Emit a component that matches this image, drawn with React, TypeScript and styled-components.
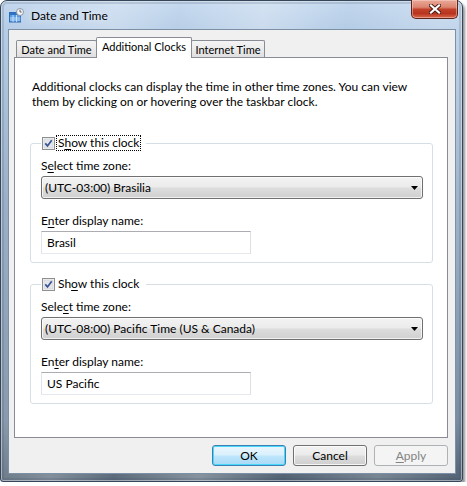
import React from "react";
import styled, { createGlobalStyle } from "styled-components";

const uiFont = `Lato, "Noto Sans", "DejaVu Sans", sans-serif`;

const GlobalStyle = createGlobalStyle`
  html, body {
    margin: 0;
    padding: 0;
    background: #ffffff;
  }
  body {
    font-family: ${uiFont};
    font-size: 12px;
    color: #000000;
  }
`;

const Window = styled.div`
  width: 463px;
  height: 482px;
  box-sizing: border-box;
  display: flex;
  flex-direction: column;
  border: 1px solid #33465b;
  border-radius: 7px 7px 3px 3px;
  background:
    linear-gradient(
      98deg,
      rgba(255, 255, 255, 0) 0%,
      rgba(255, 255, 255, 0.28) 22%,
      rgba(255, 255, 255, 0.05) 34%,
      rgba(255, 255, 255, 0.3) 50%,
      rgba(255, 255, 255, 0) 66%,
      rgba(255, 255, 255, 0.22) 84%,
      rgba(255, 255, 255, 0) 100%
    ),
    linear-gradient(
      to bottom,
      #c2d7ee 0px,
      #b4cce6 28px,
      #93aac4 200px,
      #74889d 420px,
      #4f5f70 482px
    );
  box-shadow: 2px 3px 3px rgba(0, 0, 0, 0.45),
    inset 0 0 0 1px rgba(255, 255, 255, 0.45),
    inset 0 0 0 3px rgba(60, 80, 100, 0.18);
`;

const TitleBar = styled.div`
  height: 28px;
  flex: none;
  display: flex;
  align-items: center;
  padding-left: 8px;
  padding-right: 4px;
`;

const TitleText = styled.span`
  margin-left: 7px;
  font-size: 12px;
  color: #000000;
  text-shadow: 0 0 8px rgba(255, 255, 255, 0.9);
`;

const CloseButton = styled.div`
  margin-left: auto;
  align-self: flex-start;
  margin-top: -1px;
  width: 47px;
  height: 19px;
  box-sizing: border-box;
  display: flex;
  align-items: center;
  justify-content: center;
  border: 1px solid #5e2419;
  border-top: none;
  border-radius: 0 0 5px 5px;
  background: linear-gradient(
    to bottom,
    #e9a998 0%,
    #dc8570 40%,
    #c2412a 52%,
    #b8341e 75%,
    #d96a4c 100%
  );
  box-shadow: inset 0 0 0 1px rgba(255, 220, 210, 0.45);
`;

const ClientArea = styled.div`
  flex: 1;
  margin: 0 6px 7px 7px;
  display: flex;
  flex-direction: column;
  border: 1px solid #7b8fa5;
  background: #f0f0f0;
  padding: 7px 7px 7px 5px;
  min-height: 0;
`;

const TabRow = styled.div`
  height: 20px;
  flex: none;
  display: flex;
  align-items: flex-end;
  padding-left: 2px;
  position: relative;
  z-index: 1;
`;

const Tab = styled.div<{ $active?: boolean; $width: number }>`
  width: ${(p) => p.$width}px;
  height: ${(p) => (p.$active ? 21 : 17)}px;
  margin-bottom: ${(p) => (p.$active ? -1 : 0)}px;
  margin-left: -1px;
  box-sizing: border-box;
  display: flex;
  align-items: center;
  justify-content: center;
  padding-bottom: ${(p) => (p.$active ? 3 : 0)}px;
  border: 1px solid #898c95;
  border-bottom: none;
  border-radius: 2px 2px 0 0;
  background: ${(p) =>
    p.$active
      ? "#ffffff"
      : "linear-gradient(to bottom, #f4f4f4 0%, #ebebeb 50%, #dfdfdf 100%)"};
  position: relative;
  z-index: ${(p) => (p.$active ? 2 : 1)};
  font-size: 11px;
  white-space: nowrap;

  &:first-child {
    margin-left: 0;
  }
`;

const Panel = styled.div`
  flex: 1;
  min-height: 0;
  box-sizing: border-box;
  background: #ffffff;
  border: 1px solid #898c95;
  padding: 21px 14px 0 15px;
`;

const Description = styled.p`
  margin: 0 0 0 2px;
  line-height: 15px;
  font-size: 12px;
`;

const Group = styled.fieldset<{ $first?: boolean }>`
  margin: ${(p) => (p.$first ? 26 : 13)}px 0 0 0;
  padding: 7px 9px 8px 10px;
  border: 1px solid #d5dfe5;
  border-radius: 3px;
  min-inline-size: 0;
`;

const Legend = styled.legend`
  padding: 0 5px 0 1px;
  height: 16px;
  display: flex;
  align-items: center;
`;

const CheckLabel = styled.span<{ $focused?: boolean }>`
  margin-left: 1px;
  padding: 0 1px;
  line-height: 14px;
  border: 1px dotted ${(p) => (p.$focused ? "#000000" : "transparent")};
`;

const FieldLabel = styled.div`
  line-height: 15px;
  margin-bottom: 3px;
`;

const ComboBox = styled.div`
  height: 23px;
  box-sizing: border-box;
  display: flex;
  align-items: center;
  justify-content: space-between;
  padding: 0 4px 0 3px;
  margin-bottom: 14px;
  border: 1px solid #707070;
  border-radius: 3px;
  background: linear-gradient(
    to bottom,
    #f3f3f3 0%,
    #ebebeb 48%,
    #dddddd 52%,
    #d0d0d0 100%
  );
  box-shadow: inset 0 0 0 1px rgba(255, 255, 255, 0.7);
`;

const TextBox = styled.input`
  display: block;
  width: 210px;
  height: 23px;
  box-sizing: border-box;
  margin: 0;
  padding: 0 5px;
  border: 1px solid;
  border-color: #abadb3 #dbdfe6 #e3e9ef #e2e3ea;
  background: #ffffff;
  font-family: ${uiFont};
  font-size: 12px;
  color: #000000;
  outline: none;
`;

const ButtonRow = styled.div`
  flex: none;
  display: flex;
  justify-content: flex-end;
  gap: 7px;
  margin-top: 7px;
`;

const Button = styled.div<{ $variant?: "default" | "normal" | "disabled" }>`
  width: 74px;
  height: 21px;
  box-sizing: border-box;
  display: flex;
  align-items: center;
  justify-content: center;
  border-radius: 3px;
  font-size: 12px;
  border: 1px solid
    ${(p) =>
      p.$variant === "default"
        ? "#3c7fb1"
        : p.$variant === "disabled"
        ? "#adb2b5"
        : "#707070"};
  color: ${(p) => (p.$variant === "disabled" ? "#838383" : "#000000")};
  background: ${(p) =>
    p.$variant === "default"
      ? "linear-gradient(to bottom, #eaf6fd 0%, #d9f0fc 48%, #bee6fd 52%, #a7d9f5 100%)"
      : p.$variant === "disabled"
      ? "#f4f4f4"
      : "linear-gradient(to bottom, #f2f2f2 0%, #ebebeb 48%, #dddddd 52%, #cfcfcf 100%)"};
  box-shadow: ${(p) =>
    p.$variant === "disabled"
      ? "none"
      : p.$variant === "default"
      ? "inset 0 0 0 1px #48d8fb"
      : "inset 0 0 0 1px rgba(255,255,255,0.8)"};
`;

const Key = styled.span`
  text-decoration: underline;
  text-underline-offset: 2px;
`;

const AppIcon = () => (
  <svg width="15" height="15" viewBox="0 0 15 15">
    <rect x="0.5" y="4.5" width="11" height="9.5" fill="#5a9ce2" stroke="#2d6cb8" />
    <rect x="1" y="5" width="10" height="2" fill="#2f73c4" />
    <path
      d="M4 7v7M7.5 7v7M1 10h10.5M1 12h10.5"
      stroke="#d9ebff"
      strokeWidth="0.8"
    />
    <circle cx="11" cy="4" r="3.5" fill="#f3f5f7" stroke="#8a96a4" />
    <path d="M11 1.8V4h1.6" stroke="#3a3a3a" strokeWidth="0.8" fill="none" />
  </svg>
);

const CloseGlyph = () => (
  <svg width="12" height="10" viewBox="0 0 12 10">
    <path d="M2 1.5l8 7M10 1.5l-8 7" stroke="#4a1810" strokeWidth="4" strokeLinecap="square" />
    <path d="M2 1.5l8 7M10 1.5l-8 7" stroke="#ffffff" strokeWidth="2.2" strokeLinecap="square" />
  </svg>
);

const CheckBox = () => (
  <svg width="13" height="13" viewBox="0 0 13 13">
    <rect x="0.5" y="0.5" width="12" height="12" fill="#f6f6f6" stroke="#8e8f8f" />
    <rect x="2" y="2" width="9" height="9" fill="#e3e6ea" stroke="#c9ccd1" strokeWidth="0.6" />
    <path d="M3.3 6.4L5.5 8.9L9.7 3.3" stroke="#3b5393" strokeWidth="1.7" fill="none" />
  </svg>
);

const DropArrow = () => (
  <svg width="7" height="4" viewBox="0 0 7 4">
    <path d="M0 0h7L3.5 4z" fill="#000000" />
  </svg>
);

interface ClockGroupProps {
  first?: boolean;
  focused?: boolean;
  showLabel: React.ReactNode;
  selectLabel: React.ReactNode;
  nameLabel: React.ReactNode;
  zone: string;
  name: string;
}

const ClockGroup: React.FC<ClockGroupProps> = ({
  first,
  focused,
  showLabel,
  selectLabel,
  nameLabel,
  zone,
  name,
}) => (
  <Group $first={first}>
    <Legend>
      <CheckBox />
      <CheckLabel $focused={focused}>{showLabel}</CheckLabel>
    </Legend>
    <FieldLabel>{selectLabel}</FieldLabel>
    <ComboBox>
      <span>{zone}</span>
      <DropArrow />
    </ComboBox>
    <FieldLabel>{nameLabel}</FieldLabel>
    <TextBox defaultValue={name} readOnly />
  </Group>
);

export default function App() {
  return (
    <>
      <GlobalStyle />
      <Window>
        <TitleBar>
          <AppIcon />
          <TitleText>Date and Time</TitleText>
          <CloseButton>
            <CloseGlyph />
          </CloseButton>
        </TitleBar>
        <ClientArea>
          <TabRow>
            <Tab $width={81}>Date and Time</Tab>
            <Tab $width={96} $active>
              Additional Clocks
            </Tab>
            <Tab $width={74}>Internet Time</Tab>
          </TabRow>
          <Panel>
            <Description>
              Additional clocks can display the time in other time zones. You can view
              <br />
              them by clicking on or hovering over the taskbar clock.
            </Description>
            <ClockGroup
              first
              focused
              showLabel={
                <>
                  S<Key>h</Key>ow this clock
                </>
              }
              selectLabel={
                <>
                  S<Key>e</Key>lect time zone:
                </>
              }
              nameLabel={
                <>
                  E<Key>n</Key>ter display name:
                </>
              }
              zone="(UTC-03:00) Brasilia"
              name="Brasil"
            />
            <ClockGroup
              showLabel={
                <>
                  Sh<Key>o</Key>w this clock
                </>
              }
              selectLabel={
                <>
                  Sele<Key>c</Key>t time zone:
                </>
              }
              nameLabel={
                <>
                  En<Key>t</Key>er display name:
                </>
              }
              zone="(UTC-08:00) Pacific Time (US & Canada)"
              name="US Pacific"
            />
          </Panel>
          <ButtonRow>
            <Button $variant="default">OK</Button>
            <Button>Cancel</Button>
            <Button $variant="disabled">
              <Key>A</Key>pply
            </Button>
          </ButtonRow>
        </ClientArea>
      </Window>
    </>
  );
}
